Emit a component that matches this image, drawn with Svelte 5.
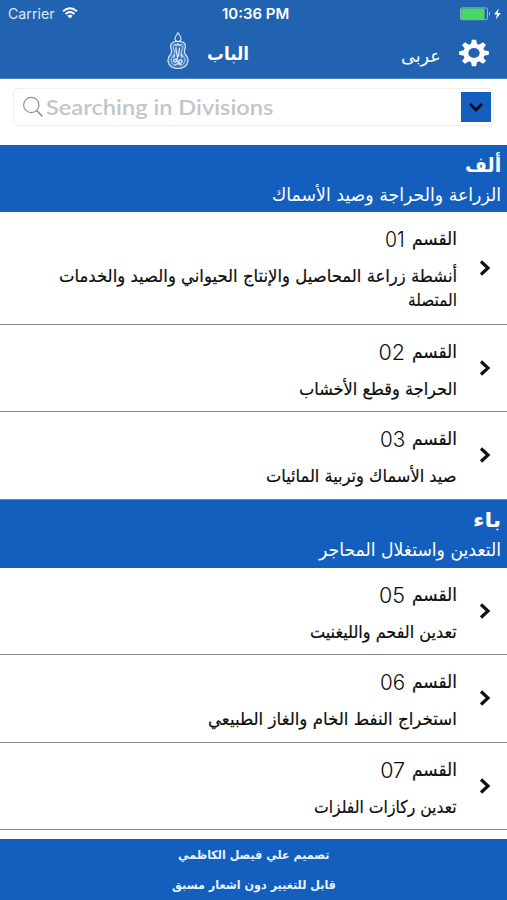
<script>
  const sections = [
    {
      letter: 'ألف', letterWidth: 36, title: 'الزراعة والحراجة وصيد الأسماك', width: 229,
      rows: [
        { number: '01', numberWidth: 20, lines: [['أنشطة زراعة المحاصيل والإنتاج الحيواني والصيد والخدمات', 398], ['المتصلة', 49]] },
        { number: '02', numberWidth: 26, lines: [['الحراجة وقطع الأخشاب', 158]] },
        { number: '03', numberWidth: 25, lines: [['صيد الأسماك وتربية المائيات', 191]] }
      ]
    },
    {
      letter: 'باء', letterWidth: 28, title: 'التعدين واستغلال المحاجر', width: 182,
      rows: [
        { number: '05', numberWidth: 26, lines: [['تعدين الفحم والليغنيت', 147]] },
        { number: '06', numberWidth: 25, lines: [['استخراج النفط الخام والغاز الطبيعي', 249]] },
        { number: '07', numberWidth: 25, lines: [['تعدين ركازات الفلزات', 143]] }
      ]
    }
  ];

  // Condenses or stretches a line of text so that it takes the given width.
  function fit(node, width) {
    const natural = node.offsetWidth;
    const side = node.classList.contains('ltr') ? 'marginRight' : 'marginLeft';
    node.style.transform = `scaleX(${width / natural})`;
    node.style[side] = `${width - natural}px`;
  }
</script>

<div class="screen">
  <header>
    <div class="status">
      <div class="carrier">
        <span class="ltr" use:fit={47}>Carrier</span>
        <svg width="16" height="12" viewBox="0 0 16 12" fill="none" stroke="#fff" stroke-width="1.9">
          <path d="M1 4.4Q8-1.8 15 4.4M3.5 7Q8 3 12.5 7" />
          <path d="M5.3 8.7Q8 6.6 10.7 8.7L8 11.5Z" fill="#fff" stroke="none" />
        </svg>
      </div>
      <div class="time"><span class="ltr" use:fit={67}>10:36 PM</span></div>
      <svg class="battery" width="42" height="14" viewBox="0 0 42 14">
        <rect x=".5" y=".9" width="27" height="11.8" rx="1.6" fill="none" stroke="#8eb4d9" />
        <rect x="1.2" y="1.6" width="23.3" height="10.4" rx=".8" fill="#4bd763" />
        <path d="M29 4.7q2 2 0 4z" fill="#c5d9ee" />
        <path d="M38.8 1.5 34 7.6h3l-1.2 4.8 5-6.4h-3z" fill="#fff" />
      </svg>
    </div>
    <div class="nav">
      <svg class="logo" width="22" height="38" viewBox="0 0 22 38" fill="none" stroke="#d6e8f8" stroke-linecap="round">
        <path d="M11 .8C9.5 3.5 7.5 5 8 7.2c.5 3 5.5 3 6 0C14.5 5 12.5 3.5 11 .8z" stroke-width="1.1" />
        <path d="M8.5 9.500C4 10 3 13 4 16.500c.6 2.500 1.400 3.500-.5 6C-.5 27 .5 32 4.500 34.700c3.500 2.400 9.500 2.400 13 0 4-2.700 5-7.700 1-12.200-1.900-2.500-1.100-3.500-.5-6 1-3.500 0-6.500-4.500-7z" fill="#d6e8f8" fill-opacity=".18" stroke-width="1.2" />
        <path d="M7.300 12.500c-2 1.400-1.100 4 0 6.300 1 2.300-.6 4.700-2.500 7-1.500 2.600-.6 5.500 2 7M14.700 12.500c2 1.400 1.100 4 0 6.300-1 2.300.6 4.700 2.500 7 1.500 2.600.6 5.500-2 7" stroke-width=".8" />
        <path d="M8 12.500c1 2 2 .5 3-.6 1 1.200 2 2.600 3 .6M9 16c-.7 5 3 7 1 12-1.200 3-3.600 2.500-3.300.4.300-1.800 2.300-1.400 3.200.2 1.400 2.800 5.200 3.400 5.200.8 0-2.400-3.500-2-3.100.8M12.500 16.500l-1 7.500M14 22l1 3M7.500 23.500l-.8 1.600M8 33c2-1.500 4-1.500 6 0" stroke-width="1.300" />
      </svg>
      <div class="page-title"><span class="ar" use:fit={42}>الباب</span></div>
      <div class="language"><span class="ar" use:fit={40}>عربى</span></div>
      <svg class="gear" width="32" height="28" viewBox="-16 -14 32 28" fill="#fff">
        <g transform="scale(1.1 .98)">
          {#each [0, 45, 90, 135, 180, 225, 270, 315] as angle}
            <path d="M-3-8-1.900-13.500h3.800L3-8z" transform="rotate({angle})" />
          {/each}
          <circle r="7.500" fill="none" stroke="#fff" stroke-width="4.600" />
        </g>
      </svg>
    </div>
  </header>

  <div class="search">
    <div class="field">
      <svg width="22" height="22" viewBox="0 0 22 22" fill="none" stroke="#909294" stroke-width="1.200">
        <circle cx="9.300" cy="9" r="7.700" /><path d="m14.700 14.500 5.700 5.800" stroke-width="1.700" />
      </svg>
      <div class="placeholder"><span class="ltr" use:fit={227}>Searching in Divisions</span></div>
      <div class="drop">
        <svg width="16" height="11" viewBox="0 0 16 11" fill="none" stroke="#080d18" stroke-width="2.700"><path d="m2 2 6 6 6-6" /></svg>
      </div>
    </div>
  </div>

  <main>
    {#each sections as section}
      <section>
        <div class="section-head" dir="rtl">
          <div class="letter"><span class="ar" use:fit={section.letterWidth}>{section.letter}</span></div>
          <div class="section-title"><span class="ar" use:fit={section.width}>{section.title}</span></div>
        </div>
        {#each section.rows as row}
          <div class="row" class:tall={row.lines.length > 1} dir="rtl">
            <svg class="chevron" width="12" height="18" viewBox="0 0 12 18" fill="none" stroke="#111" stroke-width="3.200"><path d="m2 2.500 7 6.500-7 6.500" /></svg>
            <div class="text">
              <div class="name">
                <span class="ar" use:fit={45}>القسم</span>
                <span class="number" use:fit={row.numberWidth}>{row.number}</span>
              </div>
              {#each row.lines as [text, width]}
                <div class="line"><span class="ar" use:fit={width}>{text}</span></div>
              {/each}
            </div>
          </div>
        {/each}
      </section>
    {/each}
  </main>

  <footer dir="rtl">
    <div><span class="ar" use:fit={151}>تصميم علي فيصل الكاظمي</span></div>
    <div><span class="ar" use:fit={164}>قابل للتغيير دون اشعار مسبق</span></div>
  </footer>
</div>

<style>
  .screen {
    width: 507px;
    height: 900px;
    display: flex;
    flex-direction: column;
    overflow: hidden;
    background: #fff;
    color: #0c0c0c;
    font-family: "DejaVu Sans", sans-serif;
  }
  svg { display: block; flex: none; }
  .ar, .ltr, .number { display: inline-block; flex: none; white-space: nowrap; }
  .ar { transform-origin: right; direction: rtl; }
  .ltr { transform-origin: left; }
  .number { transform-origin: right; direction: ltr; font-family: Inter, sans-serif; font-weight: 300; font-size: 21.500px; }
  header { height: 79px; box-sizing: border-box; background: #2163b1; color: #fff; border-bottom: 1px solid #4a89c8; flex: none; }
  .status { height: 28px; display: grid; grid-template-columns: 214px 1fr 47px; align-items: center; font: 14.500px/28px Inter, sans-serif; }
  .carrier { display: flex; align-items: center; gap: 7px; padding-left: 8px; color: #dce8f5; }
  .carrier svg { margin-top: -3px; }
  .time { padding-left: 8px; font-weight: 600; }
  .nav { height: 50px; display: flex; align-items: center; }
  .logo { margin: -5px 0 0 167px; }
  .page-title { width: 42px; margin-left: 18px; display: flex; direction: rtl; font-size: 18px; font-weight: 700; }
  .language { width: 40px; margin-left: 152px; display: flex; direction: rtl; font-size: 18px; padding-top: 4px; }
  .gear { margin-left: 17px; }
  .search { height: 66px; box-sizing: border-box; padding: 9px 13px 0; flex: none; }
  .field { height: 38px; box-sizing: border-box; border: 1px solid #eeeeef; border-radius: 5px; display: flex; align-items: center; padding: 0 2px 0 8px; }
  .placeholder { flex: 1; margin-left: 2px; color: #c5c5c8; font: 600 21px/36px Lato, sans-serif; }
  .drop { width: 30px; height: 30px; background: #145fbd; display: grid; place-items: center; }
  main { flex: 1; overflow: hidden; }
  .section-head { height: 67px; box-sizing: border-box; padding: 5px 6px 0; background: #145fbd; color: #fff; }
  section + section .section-head { height: 68px; }
  .letter { height: 30px; line-height: 30px; font-size: 20px; font-weight: 700; display: flex; }
  .section-title { height: 28px; line-height: 30px; font-size: 18px; display: flex; }
  .row { height: 87.500px; box-sizing: border-box; border-bottom: 1.500px solid #898989; display: flex; align-items: center; padding-right: 16px; }
  .row.tall { height: 112.500px; }
  .text { margin-right: 22px; align-self: flex-start; padding-top: 12px; }
  .name { display: flex; gap: 7px; height: 30px; line-height: 30px; font-size: 18.500px; -webkit-text-stroke: .2px; }
  .number { -webkit-text-stroke: 0; }
  .line { display: flex; height: 24px; line-height: 24px; font-size: 17.500px; -webkit-text-stroke: .2px; }
  .name + .line { margin-top: 10px; }
  footer { height: 61px; flex: none; background: #145fbd; color: #e4f4ff; font-size: 12px; font-weight: 700; text-align: center; }
  footer div { display: flex; justify-content: center; height: 30px; line-height: 32px; }
</style>
